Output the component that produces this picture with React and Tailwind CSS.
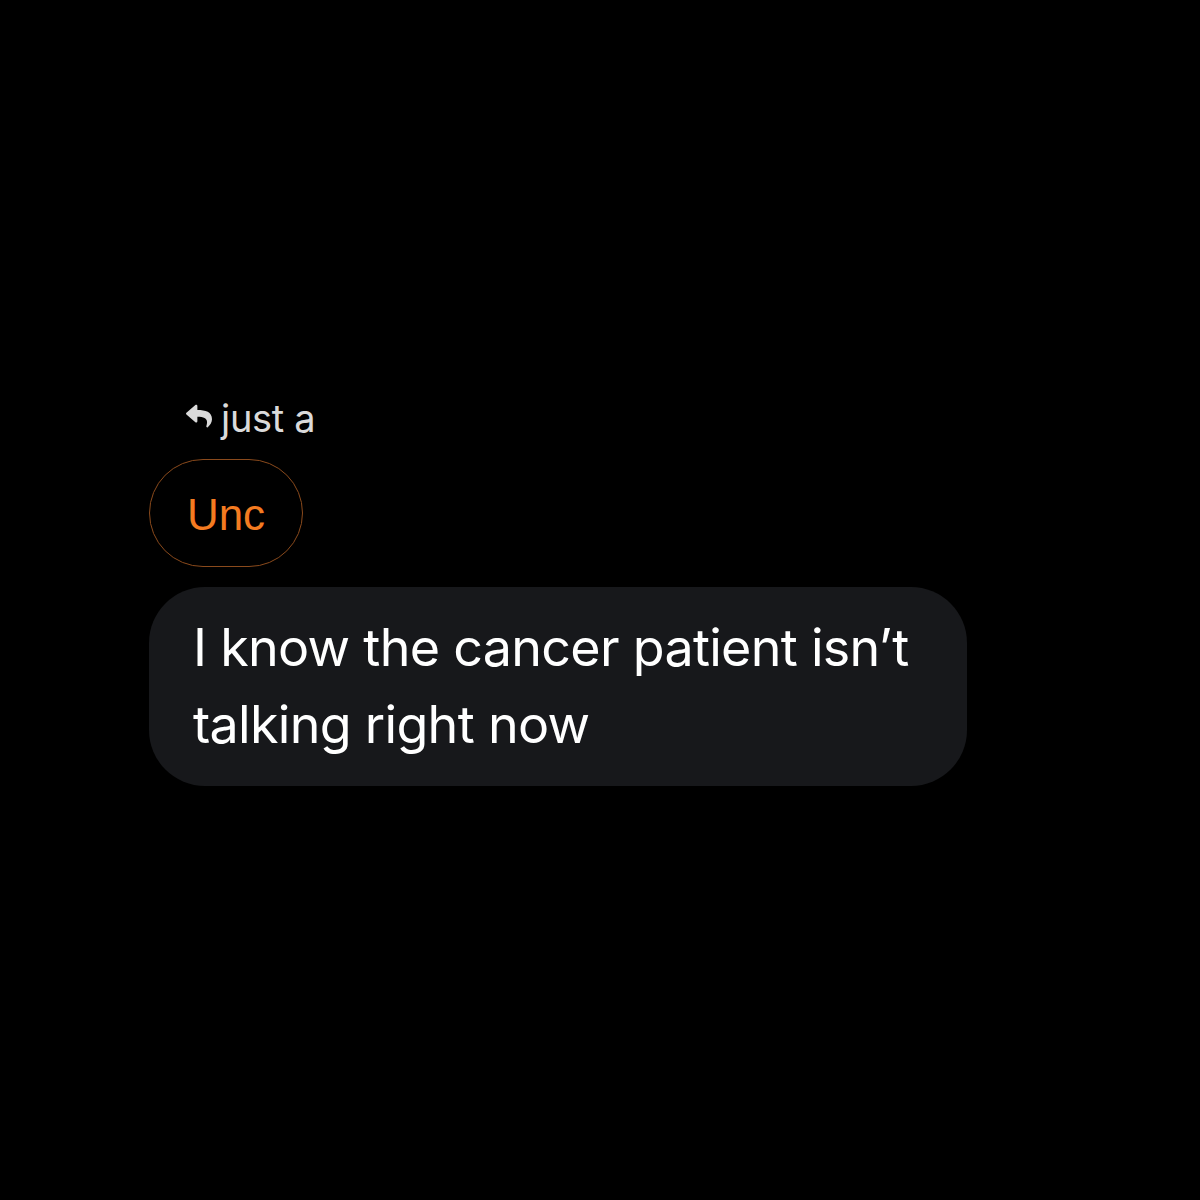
import { FaReply } from "react-icons/fa";

export default function App() {
  return (
    <div className="w-[1200px] h-[1200px] bg-black flex flex-col items-start pl-[149px] pt-[395px]">
      {/* reply header */}
      <div className="flex items-center gap-[9px] pl-[37px] h-[45px]">
        <FaReply className="text-[#dadada] w-[26px] h-[26px] mt-[-3px]" />
        <span className="text-[#dadada] text-[38px] leading-none font-['Inter',sans-serif] tracking-[-0.3px]">
          just a
        </span>
      </div>

      {/* name pill */}
      <div className="mt-[19px] w-[154px] h-[108px] rounded-full border-[1.5px] border-[#8a4a1c] flex items-center justify-center pt-[4px]">
        <span className="text-[#f47b20] text-[44px] leading-none font-['Liberation_Sans',sans-serif]">
          Unc
        </span>
      </div>

      {/* message bubble */}
      <div className="mt-[20px] w-[818px] h-[199px] rounded-[56px] bg-[#17181b] pl-[44px] pt-[22px]">
        <p className="text-white text-[52px] leading-[77px] font-['Inter',sans-serif] tracking-[-0.7px]">
          I know the cancer patient isn’t
          <br />
          talking right now
        </p>
      </div>
    </div>
  );
}
